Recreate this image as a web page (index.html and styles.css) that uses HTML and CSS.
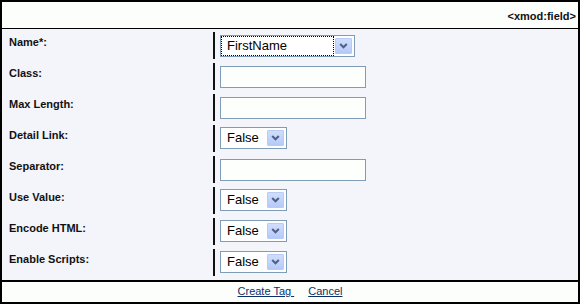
FILE: index.html
```html
<!DOCTYPE html>
<html>
<head>
<meta charset="utf-8">
<link rel="stylesheet" href="styles.css">
</head>
<body>
<div class="panel">
  <div class="header">&lt;xmod:field&gt;</div>
  <div class="rows">
    <div class="row">
      <div class="label">Name*:</div>
      <div class="field">
        <div class="select wide"><span class="sel-text focus">FirstName</span><span class="sel-btn"><svg width="9" height="6" viewBox="0 0 9 6"><polyline points="1.2,1 4.5,4.3 7.8,1" fill="none" stroke="#4d6185" stroke-width="2"/></svg></span></div>
      </div>
    </div>
    <div class="row">
      <div class="label">Class:</div>
      <div class="field"><input class="text" type="text"></div>
    </div>
    <div class="row">
      <div class="label">Max Length:</div>
      <div class="field"><input class="text" type="text"></div>
    </div>
    <div class="row">
      <div class="label">Detail Link:</div>
      <div class="field">
        <div class="select"><span class="sel-text">False</span><span class="sel-btn"><svg width="9" height="6" viewBox="0 0 9 6"><polyline points="1.2,1 4.5,4.3 7.8,1" fill="none" stroke="#4d6185" stroke-width="2"/></svg></span></div>
      </div>
    </div>
    <div class="row">
      <div class="label">Separator:</div>
      <div class="field"><input class="text" type="text"></div>
    </div>
    <div class="row">
      <div class="label">Use Value:</div>
      <div class="field">
        <div class="select"><span class="sel-text">False</span><span class="sel-btn"><svg width="9" height="6" viewBox="0 0 9 6"><polyline points="1.2,1 4.5,4.3 7.8,1" fill="none" stroke="#4d6185" stroke-width="2"/></svg></span></div>
      </div>
    </div>
    <div class="row">
      <div class="label">Encode HTML:</div>
      <div class="field">
        <div class="select"><span class="sel-text">False</span><span class="sel-btn"><svg width="9" height="6" viewBox="0 0 9 6"><polyline points="1.2,1 4.5,4.3 7.8,1" fill="none" stroke="#4d6185" stroke-width="2"/></svg></span></div>
      </div>
    </div>
    <div class="row">
      <div class="label">Enable Scripts:</div>
      <div class="field">
        <div class="select"><span class="sel-text">False</span><span class="sel-btn"><svg width="9" height="6" viewBox="0 0 9 6"><polyline points="1.2,1 4.5,4.3 7.8,1" fill="none" stroke="#4d6185" stroke-width="2"/></svg></span></div>
      </div>
    </div>
  </div>
  <div class="footer"><a href="#" class="link">Create Tag&nbsp;</a><a href="#" class="link cancel">Cancel</a></div>
</div>
</body>
</html>
```
FILE: styles.css
```css
html, body {
  margin: 0;
  padding: 0;
  background: #ffffff;
}
.panel {
  width: 580px;
  border: 2px solid #000;
  box-sizing: border-box;
  font-family: "Liberation Sans", Arial, sans-serif;
  color: #111;
}
.header {
  height: 27px;
  box-sizing: border-box;
  border-bottom: 1px solid #000;
  background: #fcfefc;
  text-align: right;
  font-size: 11px;
  font-weight: bold;
  line-height: 13px;
  padding: 8px 2px 0 0;
}
.rows {
  background: #f4f5fb;
  padding: 3px 0 4px 0;
  display: flex;
  flex-direction: column;
  gap: 4px;
}
.row {
  display: flex;
  height: 27px;
}
.label {
  width: 211px;
  box-sizing: border-box;
  padding: 4px 0 0 7px;
  font-size: 11px;
  font-weight: bold;
  line-height: 13px;
}
.field {
  flex: 1;
  border-left: 2px solid #111;
  padding-left: 5px;
}
.select {
  display: flex;
  align-items: center;
  width: 67px;
  height: 22px;
  box-sizing: border-box;
  margin-top: 2px;
  border: 1px solid #7f9db9;
  background: #fff;
  padding: 0 2px 0 0;
  gap: 1px;
}
.select.wide {
  width: 135px;
  margin-top: 3px;
}
.sel-text {
  flex: 1;
  height: 100%;
  box-sizing: border-box;
  border: 1px dotted transparent;
  padding-left: 5px;
  font-size: 13px;
  line-height: 18px;
  color: #000;
}
.sel-text.focus {
  border-color: #000;
}
.sel-btn {
  width: 17px;
  height: 16px;
  box-sizing: border-box;
  border: 1px solid #b7cbf4;
  border-radius: 1px;
  background: linear-gradient(#d0ddfd, #b6caf8);
  display: flex;
  align-items: center;
  justify-content: center;
}
.sel-btn svg {
  display: block;
}
.text {
  display: block;
  width: 146px;
  height: 22px;
  box-sizing: border-box;
  margin: 3px 0 0 0;
  border: 1px solid #7f9db9;
  background: #fdfffd;
  padding: 0 3px;
  font-family: "Liberation Sans", Arial, sans-serif;
  font-size: 13px;
  outline: none;
}
.footer {
  border-top: 2px solid #000;
  background: #fcfefc;
  height: 22px;
  box-sizing: border-box;
  padding-top: 3px;
  text-align: center;
  font-size: 11px;
  line-height: 13px;
}
.link {
  color: #0b2f6b;
  text-decoration: underline;
}
.cancel {
  margin-left: 14px;
}
```
